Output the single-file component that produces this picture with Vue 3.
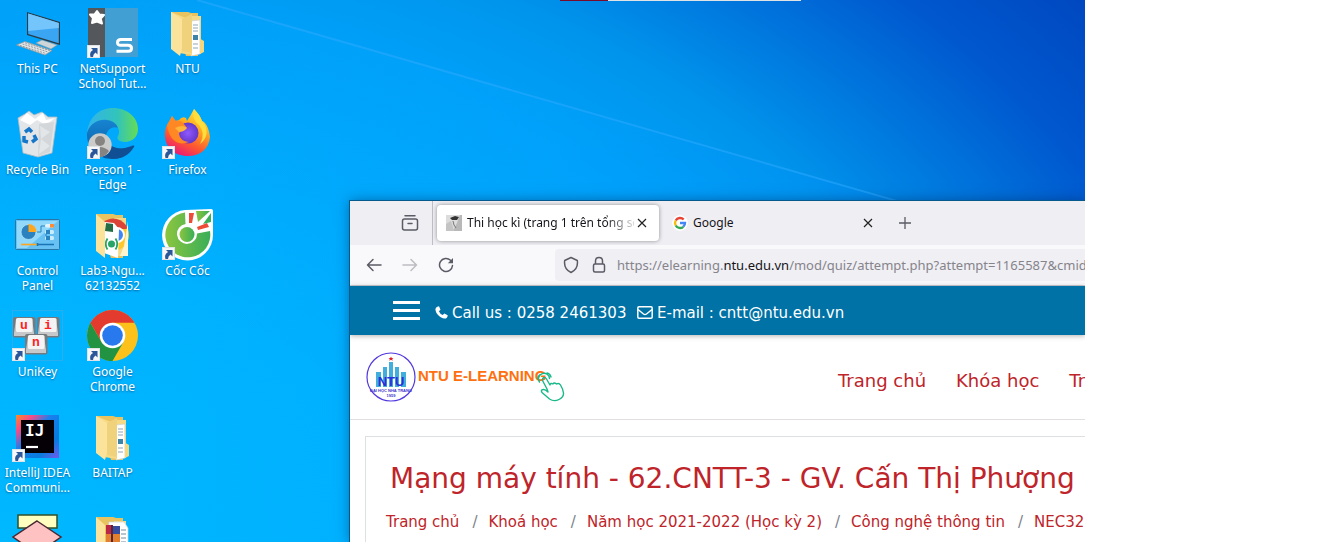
<script setup>
const columns = [
  [
    { kind: 'pc', label: 'This PC' },
    { kind: 'bin', label: 'Recycle Bin' },
    { kind: 'panel', label: 'Control Panel' },
    { kind: 'unikey', label: 'UniKey', shortcut: true },
    { kind: 'intellij', label: 'IntelliJ IDEA Communi...', shortcut: true },
    { kind: 'flow', label: '' },
  ],
  [
    { kind: 'netsupport', label: 'NetSupport School Tut...', shortcut: true },
    { kind: 'edge', label: 'Person 1 - Edge', shortcut: true },
    { kind: 'folder', inside: 'chrome', label: 'Lab3-Ngu... 62132552' },
    { kind: 'chrome', label: 'Google Chrome', shortcut: true },
    { kind: 'folder', inside: 'docs', label: 'BAITAP' },
    { kind: 'folder', inside: 'archive', label: '' },
  ],
  [
    { kind: 'folder', inside: 'docs', label: 'NTU' },
    { kind: 'firefox', label: 'Firefox', shortcut: true },
    { kind: 'coccoc', label: 'Cốc Cốc', shortcut: true },
  ],
]
const crumbs = ['Trang chủ', 'Khoá học', 'Năm học 2021-2022 (Học kỳ 2)', 'Công nghệ thông tin', 'NEC32']
const menu = ['Trang chủ', 'Khóa học', 'Tr']
</script>

<template>
  <div class="page">
    <main class="desktop">
      <svg class="beam" viewBox="0 0 1085 542" preserveAspectRatio="none" aria-hidden="true">
        <defs>
          <linearGradient id="glow" x1="0" y1="0" x2="1" y2="0">
            <stop offset="0" stop-color="#00a8ff" stop-opacity="0" />
            <stop offset=".5" stop-color="#00a4ff" stop-opacity=".28" />
            <stop offset="1" stop-color="#0080ff" stop-opacity=".18" />
          </linearGradient>
        </defs>
        <path d="M197 0 1085 255V542H0V0Z" fill="url(#glow)" />
        <path d="M197 0 1085 255" stroke="#2caaff" stroke-opacity=".55" stroke-width="2" />
      </svg>
      <div class="strip" aria-hidden="true"></div>

      <div class="icons">
        <div v-for="(column, c) in columns" :key="c" class="column">
          <button v-for="(item, i) in column" :key="i" class="shortcut" type="button" :aria-label="item.label || item.kind">
            <svg class="pic" viewBox="0 0 51 51" aria-hidden="true">
              <g v-if="item.kind === 'pc'">
                <path d="M24 36 30 33 45 38 39 42Z" fill="#cfd6da" stroke="#8d999f" stroke-width=".6" />
                <path d="M15 5 48 15V38L15 28Z" fill="#2b3a45" />
                <path d="M16.200 6.600 46.800 15.900V36.300L16.200 27Z" fill="#3aa5f2" />
                <path d="M16.200 6.600 46.800 15.900V21L16.200 24Z" fill="#74c5fb" />
                <path d="M4.500 38 13 34.500 40 43.500 33 48Z" fill="#e4e7e8" stroke="#8b969b" stroke-width=".8" />
                <path d="M8 38.500 34 46.500M10.500 37 36 45M13 35.800 38 43.700" stroke="#7d888d" stroke-width=".8" stroke-dasharray="2 1" />
              </g>
              <g v-else-if="item.kind === 'netsupport'">
                <rect x="1" y="1" width="50" height="49" fill="#429fd3" />
                <rect x="1" y="1" width="17" height="49" fill="#54575b" />
                <path d="M10 4 12.500 7.500 17 8 13.700 11.500 15 16.500 10 14.500 5 16 6 11 3 7.500 7.600 7.300Z" fill="#fff" stroke="#fff" stroke-width="2" stroke-linejoin="round" />
                <path d="M45 32.500H34Q30.500 32.500 30.500 35.500T34 38.300H41Q44.500 38.300 44.500 41.300T41 44.300H29.500" fill="none" stroke="#fff" stroke-width="3" />
              </g>
              <g v-else-if="item.kind === 'folder'">
                <path d="M9 5H26L29 6H36L36 49H24Z" fill="#e9c35f" />
                <path d="M27 9H39V47H27Z" fill="#f4d987" />
                <g v-if="item.inside === 'docs'">
                  <path d="M29 14 38 13V47L29 49Z" fill="#fff" stroke="#c4cdd3" stroke-width=".6" />
                  <path d="M31 18H36M31 21H36M31 24H36M31 37H36M31 41H36" stroke="#8fa5b5" />
                  <rect x="31" y="28" width="5" height="5" fill="#3d84a8" />
                  <path d="M37.500 9 38.500 32 42 34V45L38 47Z" fill="#f6d77d" />
                  <path d="M9 5 24 11 30 7V48L17 46Z" fill="#f6da85" />
                  <path d="M9 5 20 12V41L18 49 9 42Z" fill="#fbe39b" />
                  <path d="M20 12 30 7V46L20 44Z" fill="#f1d27c" />
                </g>
                <g v-else-if="item.inside === 'chrome'">
                  <circle cx="26" cy="26" r="16" fill="#fbc82f" />
                  <path d="M15 14A16 16 0 0 1 41 20L28 20Z" fill="#db4437" />
                  <circle cx="30" cy="26" r="7" fill="#4285f4" stroke="#fff" stroke-width="2" />
                  <path d="M41 12V47H33L37 37Z" fill="#fff4d0" />
                  <path d="M18 13 27 14 32 20 31 49 17 44Z" fill="#fff" />
                  <path d="M19 14 26 15V23L18 22Z" fill="#246d45" />
                  <circle cx="24.500" cy="35" r="3.500" fill="#27a566" />
                  <path d="M20.500 29.500Q17 35 20.500 40.500M28.500 29.500Q32 35 28.500 40.500" fill="none" stroke="#27a566" stroke-width="1.800" />
                  <path d="M9 5 18 13V49L9 42Z" fill="#fbe39b" />
                </g>
                <g v-else>
                  <path d="M22 10H37L41 16V51H20Z" fill="#fff" stroke="#ccd5dc" stroke-width=".7" />
                  <path d="M34 18H39M34 22H39M34 26H39M34 30H39" stroke="#778b9d" />
                  <path d="M19 13H26V27H19Z" fill="#ba2746" />
                  <path d="M26 14H33V27H26Z" fill="#354d9c" />
                  <path d="M19 22H33V45H19Z" fill="#e28030" />
                  <path d="M25 13V45" stroke="#5c243a" stroke-width="2" />
                  <path d="M9 5 18 13V50L9 42Z" fill="#fbe39b" />
                </g>
              </g>
              <g v-else-if="item.kind === 'bin'">
                <path d="M6 10 13 6 17 3 22 7 30 4 36 9 45 9 40 45 26 49 11 45Z" fill="#e3e6e8" stroke="#aebbc1" stroke-width=".8" />
                <path d="M8 12 15 5 23 11 31 5 34 12 43 10 34 17 25 12 18 17Z" fill="#fff" />
                <path d="M27 16 42 14 38 44 26 48Z" fill="#d3d7d9" />
                <path d="M28 18 38 24 29 31ZM29 31 38 38 27 46Z" fill="#e3e6e8" />
                <path d="M13 24 17 21 20 24M22 27 24 31 20 34M16 34 12 33V28" fill="none" stroke="#1677c8" stroke-width="3.500" />
              </g>
              <g v-else-if="item.kind === 'edge'">
                <defs>
                  <linearGradient id="edgeTop"><stop offset="0" stop-color="#32b4eb" /><stop offset=".6" stop-color="#32c4ba" /><stop offset="1" stop-color="#66dc53" /></linearGradient>
                  <linearGradient id="edgeLow" x2="0" y2="1"><stop offset="0" stop-color="#1684d2" /><stop offset="1" stop-color="#0b5a9e" /></linearGradient>
                </defs>
                <path d="M0 25C2 9 12 0 26 0 41 0 51 10 51 21 51 29 45 34 38 34 32 34 29 31 31 28 34 22 28 15 18 15 9 15 3 20 0 25Z" fill="url(#edgeTop)" />
                <path d="M0 25C3 15 12 11 20 12 28 13 32 18 31 24 28 18 20 20 19 28 18 37 29 43 38 40L47 37C42 47 34 51 25 51 11 51-1 40 0 25Z" fill="url(#edgeLow)" />
                <path d="M19 28C19 38 31 44 46 38Q48 37 47 39C40 50 31 52 22 50 12 45 11 33 19 28Z" fill="#114f94" />
                <path d="M31 20C24 17 18 24 20 32 22 37 29 40 33 39 44 39 36 35 31 32Q28 30 31 27 33 23 31 20Z" fill="#00a9fb" />
                <circle cx="13" cy="37" r="11.700" fill="#cbcbc9" />
                <circle cx="13" cy="33" r="5" fill="#858482" />
                <path d="M4 43Q13 35 22 43 18 49 13 49 8 49 4 43Z" fill="#858482" />
              </g>
              <g v-else-if="item.kind === 'firefox'">
                <defs>
                  <linearGradient id="fox" x1=".8" y1="0" x2=".3" y2="1"><stop offset="0" stop-color="#ffef45" /><stop offset=".35" stop-color="#ffae20" /><stop offset=".7" stop-color="#ff5730" /><stop offset="1" stop-color="#e9167a" /></linearGradient>
                  <radialGradient id="globe"><stop offset="0" stop-color="#9059ff" /><stop offset="1" stop-color="#6337c8" /></radialGradient>
                </defs>
                <path d="M32 1C35 5 38 7 40 13L42 14Q47 19 48 29C47 41 38 48 26 48 12 48 3 39 3 27 3 20 5 16 8 13L10 8 13 13 17 12Q20 8 24 10L25 13Q29 7 32 1Z" fill="url(#fox)" />
                <circle cx="26" cy="25" r="10.500" fill="url(#globe)" />
                <path d="M5 17 10 8 14 13Q19 12 22 16L25 20Q18 21 17 26 18 33 27 34C14 39 7 30 5 17Z" fill="#ff8724" />
                <path d="M13 20Q21 16 25 20 22 24 17 24Z" fill="#ffb43a" />
                <path d="M32 1Q29 11 37 17 44 26 38 36 48 28 43 17L40 13Q38 7 32 1Z" fill="#ffdd3c" />
              </g>
              <g v-else-if="item.kind === 'panel'">
                <rect x="3.500" y="10.500" width="44" height="30" rx="1" fill="#67c1f2" stroke="#2776a5" />
                <path d="M5 12H46L15 39H5Z" fill="#91d8fb" />
                <circle cx="16.500" cy="23" r="7.500" fill="#2b82be" stroke="#c4eafd" stroke-width=".7" />
                <path d="M16.500 23V15A8 8 0 0 1 24.500 23Z" fill="#ffa61f" />
                <path d="M25 23H29V17H34M34 22V29" fill="none" stroke="#2b82be" />
                <rect x="33" y="15" width="9" height="3.500" rx="1.500" fill="#dff4ff" /><rect x="38" y="15" width="4" height="3.500" fill="#ff8b35" />
                <rect x="33" y="21" width="9" height="4" rx="1.500" fill="#c9edff" /><rect x="34" y="21" width="4" height="4" fill="#2783c2" />
                <rect x="33" y="27" width="9" height="4" rx="1.500" fill="#c9edff" /><rect x="34" y="27" width="4" height="4" fill="#2783c2" />
                <path d="M9 35.500H25" stroke="#ffa61f" stroke-width="1.600" /><path d="M25 35.500H42M25.500 34V37" stroke="#1875b7" stroke-width="1.600" />
              </g>
              <g v-else-if="item.kind === 'unikey'">
                <rect x=".5" y=".5" width="50" height="50" fill="none" stroke="#3cabe6" stroke-width=".7" />
                <g v-for="(key, k) in [[1, 7, 'u'], [25, 7, 'i'], [13, 24, 'n']]" :key="k" :transform="`translate(${key[0]} ${key[1]})`">
                  <rect width="22.500" height="20.500" rx="2" fill="#777a7d" />
                  <path d="M1 16 3 2H19L21 16V19H1Z" fill="#c6c8ca" />
                  <rect x="3" y="1" width="16.500" height="14" rx="1.500" fill="#f4f4f4" />
                  <text x="11" y="12" text-anchor="middle" class="key">{{ key[2] }}</text>
                </g>
              </g>
              <g v-else-if="item.kind === 'chrome'">
                <circle cx="25.500" cy="25.500" r="25.500" fill="#fcc21b" />
                <path d="M3.400 12.800A25.500 25.500 0 0 1 47.600 12.800H25.500L14.500 32Z" fill="#e33b2e" />
                <path d="M3.400 12.800A25.500 25.500 0 0 0 25.500 51L36.500 32 25.500 38 14.500 32Z" fill="#229342" />
                <circle cx="25.500" cy="25.500" r="12.800" fill="#fff" />
                <circle cx="25.500" cy="25.500" r="10.300" fill="#2979ee" />
              </g>
              <g v-else-if="item.kind === 'coccoc'">
                <defs><linearGradient id="leaf" x2="1"><stop offset="0" stop-color="#8bc53f" /><stop offset="1" stop-color="#39ae58" /></linearGradient></defs>
                <path d="M0 26A25.500 25.500 0 0 1 23 1L49 0Q51 0 51 2V26A25.500 25.500 0 0 1 0 26Z" fill="#fff" />
                <path d="M23 3.500A22.500 22.500 0 1 0 48 22L35 24.500A10 10 0 1 1 23.500 15Z" fill="url(#leaf)" />
                <circle cx="25" cy="25.500" r="7.500" fill="url(#leaf)" />
                <path d="M34 2H48L36 13Z" fill="url(#leaf)" /><path d="M49 4V13L41 15Z" fill="#39ae58" />
                <path d="M27 4H32L30 14H27ZM45 14 47 18 36 21 35 18Z" fill="#ed4c38" />
              </g>
              <g v-else-if="item.kind === 'intellij'">
                <defs><linearGradient id="idea" x2="1" y2="1"><stop offset="0" stop-color="#ff8b20" /><stop offset=".2" stop-color="#f54b88" /><stop offset=".42" stop-color="#187fef" /><stop offset=".75" stop-color="#087bdd" /><stop offset="1" stop-color="#7657ee" /></linearGradient></defs>
                <rect x="4" y="4" width="43" height="43" fill="url(#idea)" />
                <rect x="9" y="9" width="33" height="33" fill="#050006" />
                <text x="13" y="25" class="ij">IJ</text>
                <path d="M14 36H26" stroke="#fff" stroke-width="2.200" />
              </g>
              <g v-else>
                <rect x="6" y="3" width="39" height="13" fill="#ffffbf" stroke="#315027" stroke-width="1.500" />
                <path d="M25 9 49 25 25 42 1 25Z" fill="#ffc2c2" stroke="#4b2831" stroke-width="1.500" />
              </g>
              <g v-if="item.shortcut">
                <rect x=".5" y="38.500" width="12" height="12" fill="#f6f7f9" stroke="#dfe3e7" />
                <path d="M4 41H10.500V47.500L8.500 45.500Q6 47 6 50H3.500Q2 45 6 43Z" fill="#2b579a" />
              </g>
            </svg>
            <span class="label">{{ item.label }}</span>
          </button>
        </div>
      </div>

      <section class="window">
        <header class="tabs">
          <button class="icon-btn recent" type="button" aria-label="Recent tabs">
            <svg width="18" height="18" viewBox="0 0 18 18" fill="none" stroke="#5b5b66" stroke-width="1.500" stroke-linecap="round"><path d="M4 1.800H14M7 9.500H11" /><rect x="1.500" y="5" width="15" height="11" rx="2" /></svg>
          </button>
          <div class="tab active">
            <svg class="fav" viewBox="0 0 16 16" aria-hidden="true"><rect width="16" height="16" fill="#dcdcdc" /><path d="M7 16H16V0H14L11 8Z" fill="#b8b8b8" /><path d="M0 16V9L5 6 8 16Z" fill="#c4c4c4" /><path d="M4 3 9 1 13 2 11 5H6Z" fill="#343434" /><path d="M7 6 8 10 10 13" stroke="#777" fill="none" /></svg>
            <span class="title fade">Thi học kì (trang 1 trên tổng số 3)</span>
            <button class="icon-btn close" type="button" aria-label="Close tab"><svg width="10" height="10" viewBox="0 0 10 10" stroke="#222" stroke-width="1.200"><path d="M1 1 9 9M9 1 1 9" /></svg></button>
          </div>
          <div class="tab">
            <svg class="fav" viewBox="0 0 16 16" fill="none" stroke-width="2.400" aria-hidden="true"><circle cx="8" cy="8" r="8" fill="#fff" /><path d="M11.700 4.500A5 5 0 0 0 3.700 5.500" stroke="#ea4335" /><path d="M3.700 5.500A5 5 0 0 0 3.700 10.500" stroke="#fbbc05" /><path d="M3.700 10.500A5 5 0 0 0 11.300 11.800" stroke="#34a853" /><path d="M11.300 11.800Q13 10 13 8H8" stroke="#4285f4" /></svg>
            <span class="title">Google</span>
            <button class="icon-btn close" type="button" aria-label="Close tab"><svg width="10" height="10" viewBox="0 0 10 10" stroke="#222" stroke-width="1.200"><path d="M1 1 9 9M9 1 1 9" /></svg></button>
          </div>
          <button class="icon-btn add" type="button" aria-label="New tab"><svg width="12" height="12" viewBox="0 0 12 12" stroke="#5b5b66" stroke-width="1.300"><path d="M6 0V12M0 6H12" /></svg></button>
        </header>

        <div class="toolbar">
          <div class="nav">
            <button class="icon-btn" type="button" aria-label="Back"><svg width="16" height="16" viewBox="0 0 16 16" fill="none" stroke="#5b5b66" stroke-width="1.500" stroke-linecap="round" stroke-linejoin="round"><path d="M15 8H1.500M7 2.500 1.500 8 7 13.500" /></svg></button>
            <button class="icon-btn" type="button" aria-label="Forward" disabled><svg width="16" height="16" viewBox="0 0 16 16" fill="none" stroke="#bcbcc2" stroke-width="1.500" stroke-linecap="round" stroke-linejoin="round"><path d="M1 8H14.500M9 2.500 14.500 8 9 13.500" /></svg></button>
            <button class="icon-btn" type="button" aria-label="Reload"><svg width="16" height="16" viewBox="0 0 16 16" fill="none" stroke="#5b5b66" stroke-width="1.500" stroke-linecap="round"><path d="M12.500 3.300A6.500 6.500 0 1 0 14.500 8.500" /><path d="M15 1V6.200H9.800Z" fill="#5b5b66" stroke="none" /></svg></button>
          </div>
          <div class="address">
            <svg width="16" height="18" viewBox="0 0 16 18" fill="none" stroke="#5b5b66" stroke-width="1.500" stroke-linejoin="round" aria-hidden="true"><path d="M8 1.500 14.300 4.500Q15.500 13 8 16.500 .500 13 1.700 4.500Z" /></svg>
            <svg width="16" height="18" viewBox="0 0 16 18" fill="none" stroke="#5b5b66" stroke-width="1.500" aria-hidden="true"><rect x="2.500" y="8" width="11" height="8" rx="1.500" /><path d="M4.500 8V5Q4.500 1.500 8 1.500T11.500 5V8" /></svg>
            <div class="url" role="textbox" aria-label="Address" contenteditable="true" spellcheck="false">https://elearning.<b>ntu.edu.vn</b>/mod/quiz/attempt.php?attempt=1165587&amp;cmid</div>
          </div>
        </div>

        <div class="contact">
          <button class="burger" type="button" aria-label="Menu"><i></i><i></i><i></i></button>
          <p>
            <svg width="13" height="13" viewBox="0 0 13 13" fill="#fff" aria-hidden="true"><path d="M2.300.700 4 .300 5.500 3.700 3.900 5.200Q5 8 7.800 9.100L9.300 7.500 12.700 9.200Q12.500 12.500 9.600 12.600C5 12.300.500 7.500.400 3.300Q.600 1.500 2.300.700Z" /></svg>
            <span class="phone">Call us : 0258 2461303</span>
            <svg width="16" height="13" viewBox="0 0 16 13" fill="none" stroke="#fff" stroke-width="1.500" aria-hidden="true"><rect x=".8" y=".8" width="14.400" height="11.400" rx="1.200" /><path d="M1 3.500 6.500 8Q8 9 9.500 8L15 3.500" /></svg>
            <span>E-mail : cntt@ntu.edu.vn</span>
          </p>
        </div>

        <div class="brand">
          <a class="logo" href="#">
            <svg width="50" height="50" viewBox="0 0 50 50" aria-hidden="true">
              <circle cx="25" cy="25" r="24" fill="#fff" stroke="#5138df" stroke-width="1.200" />
              <path d="M10 35V20H15V35M17 35V15H21V35M23 35V10H27V35M29 35V15H33V35M35 35V20H40V35" fill="#42aedb" />
              <path d="M25 4.500 25.700 6H27.500L26.200 7 26.700 8.700 25 7.700 23.300 8.700 23.800 7 22.500 6H24.300Z" fill="#e01c25" />
              <text x="25" y="34" text-anchor="middle" class="crest">NTU</text>
              <text x="25" y="40" text-anchor="middle" class="crest-small">ĐẠI HỌC NHA TRANG</text>
              <text x="25" y="44.500" text-anchor="middle" class="crest-small">1959</text>
            </svg>
            <span>NTU E-LEARNING</span>
            <svg class="hand" width="28" height="30" viewBox="0 0 28 30" fill="none" stroke="#18b889" stroke-width="1.400" stroke-linejoin="round" stroke-linecap="round" aria-hidden="true"><path d="M10 17 5.500 8.500Q5 6 7 5.500 8.500 5.300 9.500 7L13 13Q13.500 10.500 16 12 17 10 19.500 12 22 10.500 23.500 13 26 17 26.500 21 26.800 25 22 27.500 17 30 12.500 27L5 20.500Q3.500 18 6 17.500 8 17 11 20Z" /><path d="M2.500 10A5.500 5.500 0 1 1 12.500 6.500M.800 7Q.500 4 3 2.500M10 1Q13 1.500 14 5" /></svg>
          </a>
          <nav class="menu"><a v-for="m in menu" :key="m" href="#">{{ m }}</a></nav>
        </div>

        <article class="course">
          <h1>Mạng máy tính - 62.CNTT-3 - GV. Cấn Thị Phượng</h1>
          <ol class="crumbs"><li v-for="c in crumbs" :key="c"><a href="#">{{ c }}</a></li></ol>
        </article>
      </section>
    </main>
  </div>
</template>

<style>
body { margin: 0; background: #fff; }
</style>

<style scoped>
* { box-sizing: border-box; }
button { padding: 0; border: 0; background: none; font: inherit; color: inherit; }
a { color: inherit; text-decoration: none; }
.page { display: flex; height: 100vh; padding: 0 253px 6px 0; font-family: "Noto Sans", sans-serif; }
.desktop {
  position: relative; flex: 1; min-width: 0; overflow: hidden;
  background: radial-gradient(ellipse 1150px 760px at 0% 100%, #00b8ff 0%, #00b3ff 35%, #00a6fb 62%, #00a0f8 72%, #0094ec 84%, #006cd8 99%, #0058cf 106%, #0048c0 118%);
}
.beam { position: absolute; inset: 0; width: 100%; height: 100%; }
.strip { position: absolute; top: 0; left: 560px; width: 241px; height: 1px; background: linear-gradient(to right, #7a0a2c 48px, #dfe3e6 48px); }
.icons { position: relative; display: flex; padding-top: 7px; }
.column { display: flex; flex-direction: column; width: 75px; }
.shortcut { display: flex; flex-direction: column; align-items: center; gap: 3px; height: 101px; color: #fff; }
.pic { width: 51px; height: 51px; flex: none; overflow: visible; }
.label { width: 72px; font-size: 12px; line-height: 15px; text-align: center; text-shadow: 0 1px 2px rgba(0, 40, 90, .55); }
.key { font: bold 13px "Liberation Mono", monospace; fill: #f22; }
.ij { font: bold 16px "DejaVu Sans Mono", monospace; fill: #fff; }

.window {
  position: absolute; inset: 201px 0 0 350px; display: flex; flex-direction: column; overflow: hidden;
  background: #fff; box-shadow: 0 0 0 1px #06598c, 0 0 12px rgba(0, 30, 80, .5);
}
.icon-btn { display: flex; align-items: center; justify-content: center; flex: none; }
.tabs { display: flex; align-items: center; gap: 4px; height: 44px; flex: none; background: #efeef3; }
.recent { width: 83px; height: 44px; padding-left: 37px; border-right: 1px solid #bebdc5; }
.tab { display: flex; align-items: center; width: 222px; height: 36px; padding: 0 9px; border-radius: 4px; }
.active { background: #fff; box-shadow: 0 0 4px rgba(0, 0, 0, .4); }
.fav { width: 16px; height: 16px; flex: none; margin-right: 5px; }
.tab:not(.active) .fav { border-radius: 8px; }
.title { flex: 1; overflow: hidden; white-space: nowrap; font-size: 12px; line-height: 20px; color: #15141a; }
.fade { mask-image: linear-gradient(to right, #000 138px, transparent 172px); }
.close { width: 16px; height: 16px; }
.add { width: 32px; height: 32px; }
.toolbar { display: flex; align-items: center; height: 41px; flex: none; border-bottom: 1px solid #cccbd3; background: #f9f9fb; }
.nav { display: flex; gap: 4px; width: 205px; padding-left: 8px; }
.nav .icon-btn { width: 32px; height: 32px; }
.address { display: flex; align-items: center; flex: 1; min-width: 0; height: 32px; gap: 12px; padding-left: 8px; border-radius: 4px 0 0 4px; background: #f0eff4; }
.address svg { flex: none; }
.url { flex: 1; min-width: 0; overflow: hidden; white-space: nowrap; margin-left: -2px; font-size: 13px; line-height: 20px; color: #85848b; }
.url b { font-weight: 400; color: #15141a; }
.contact { position: relative; display: flex; align-items: center; gap: 15px; height: 49px; flex: none; padding-left: 43px; background: #0072a5; box-shadow: 0 1px 5px rgba(0, 0, 0, .3); color: #fff; }
.burger { display: flex; flex-direction: column; gap: 5px; width: 27px; }
.burger i { height: 3px; background: #fff; }
.contact p { display: flex; align-items: center; gap: 4px; margin: 4px 0 0; font: 15px/20px "DejaVu Sans", sans-serif; white-space: nowrap; }
.phone { min-width: 181px; }
.brand { display: flex; align-items: center; height: 85px; flex: none; padding-left: 16px; border-bottom: 1px solid #e2dfe1; }
.logo { display: flex; align-items: center; width: 472px; flex: none; color: #ff700f; font: bold 15px/20px "Liberation Sans", sans-serif; white-space: nowrap; }
.logo span { margin: 0 0 2px 2px; }
.hand { margin: 20px 0 0 -9px; }
.crest { font: bold 13px "Liberation Sans", sans-serif; fill: #2731d8; }
.crest-small { font: bold 4px "Liberation Sans", sans-serif; fill: #3c35cc; }
.menu { display: flex; gap: 30px; margin-top: 8px; color: #be2429; font: 18px/24px "DejaVu Sans", sans-serif; white-space: nowrap; }
.course { flex: 1; margin: 16px 0 0 15px; padding: 24px 0 0 20px; border: solid #dedfe1; border-width: 1px 0 0 1px; color: #be2429; font-family: "DejaVu Sans", sans-serif; white-space: nowrap; }
h1 { margin: 0 0 0 4px; font-size: 28px; font-weight: 400; line-height: 36px; }
.crumbs { display: flex; margin: 15px 0 0; padding: 0; list-style: none; font-size: 15px; line-height: 20px; }
.crumbs li + li::before { content: "/"; padding: 0 11px 0 13px; color: #7a828a; }
</style>
